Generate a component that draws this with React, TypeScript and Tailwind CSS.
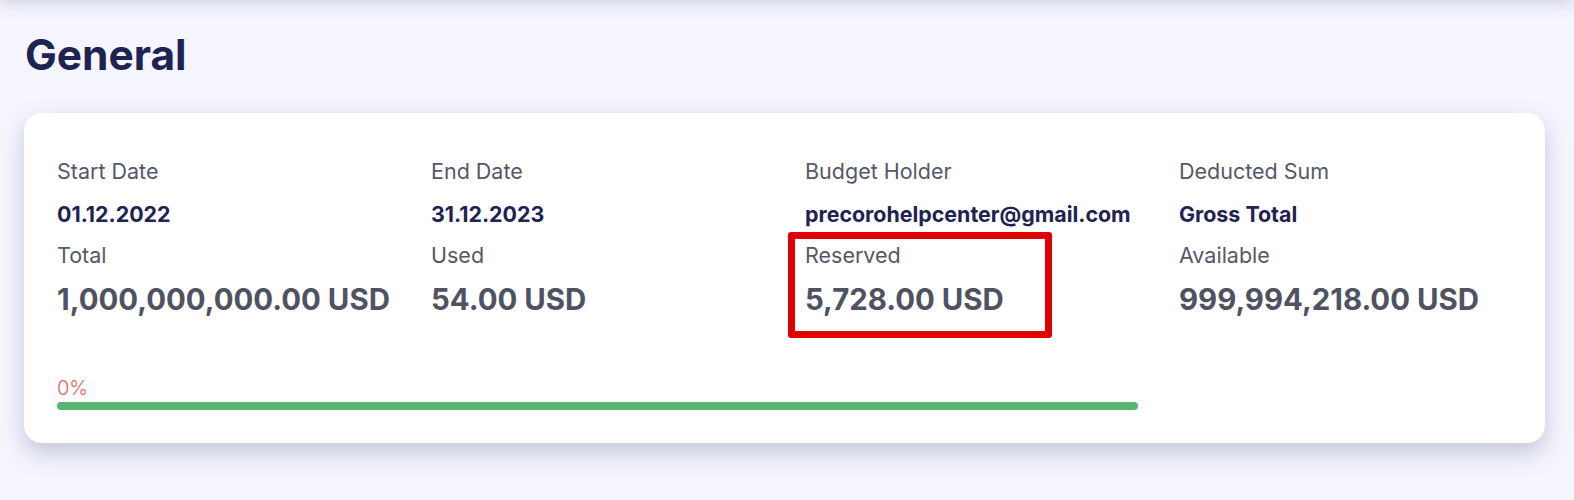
import React from "react";

const F = { fontFamily: "Inter, 'Noto Sans', sans-serif" };

function Cell({ label, value, big, children }: { label: string; value: string; big?: boolean; children?: React.ReactNode }) {
  return (
    <div className="relative flex flex-col">
      {children}
      <div className="text-[21.5px] leading-[26px] text-[#545867]">{label}</div>
      {big ? (
        <div className="mt-[14px] text-[29.4px] leading-[36px] font-bold text-[#4f5361]">{value}</div>
      ) : (
        <div className="mt-[17px] text-[21.4px] leading-[26px] font-bold text-[#1e2352]">{value}</div>
      )}
    </div>
  );
}

export default function App() {
  return (
    <div style={F} className="relative min-h-[500px] w-full overflow-hidden bg-[#f4f5fd]">
      <div className="absolute left-0 right-0 top-[-40px] h-[40px] bg-[#f4f5fd] shadow-[0_2px_16px_rgba(120,125,170,0.35)]" />
      <div className="pt-[29px] pl-[25px]">
        <h1 className="text-[42.4px] leading-[52px] font-bold text-[#1e2352]">General</h1>
      </div>
      <div className="mt-[32px] ml-[24px] mr-[29px] rounded-[18px] bg-white shadow-[0_10px_22px_rgba(140,145,185,0.45)] pl-[33px] pt-[45px] pb-[33px]">
        <div className="grid grid-cols-[repeat(4,374px)] gap-y-[15px]">
          <Cell label="Start Date" value="01.12.2022" />
          <Cell label="End Date" value="31.12.2023" />
          <Cell label="Budget Holder" value="precorohelpcenter@gmail.com" />
          <Cell label="Deducted Sum" value="Gross Total" />
          <Cell label="Total" value="1,000,000,000.00 USD" big />
          <Cell label="Used" value="54.00 USD" big />
          <Cell label="Reserved" value="5,728.00 USD" big>
            <div className="absolute left-[-17px] top-[-10px] h-[106px] w-[264px] rounded-[3px] border-[7px] border-[#e00000]" />
          </Cell>
          <Cell label="Available" value="999,994,218.00 USD" big />
        </div>
        <div className="mt-[58px] text-[20px] leading-[24px] font-light text-[#ee5d5d]">0%</div>
        <div className="mt-[2px] h-[8px] w-[1081px] rounded-full bg-[#5bb475]" />
      </div>
    </div>
  );
}
